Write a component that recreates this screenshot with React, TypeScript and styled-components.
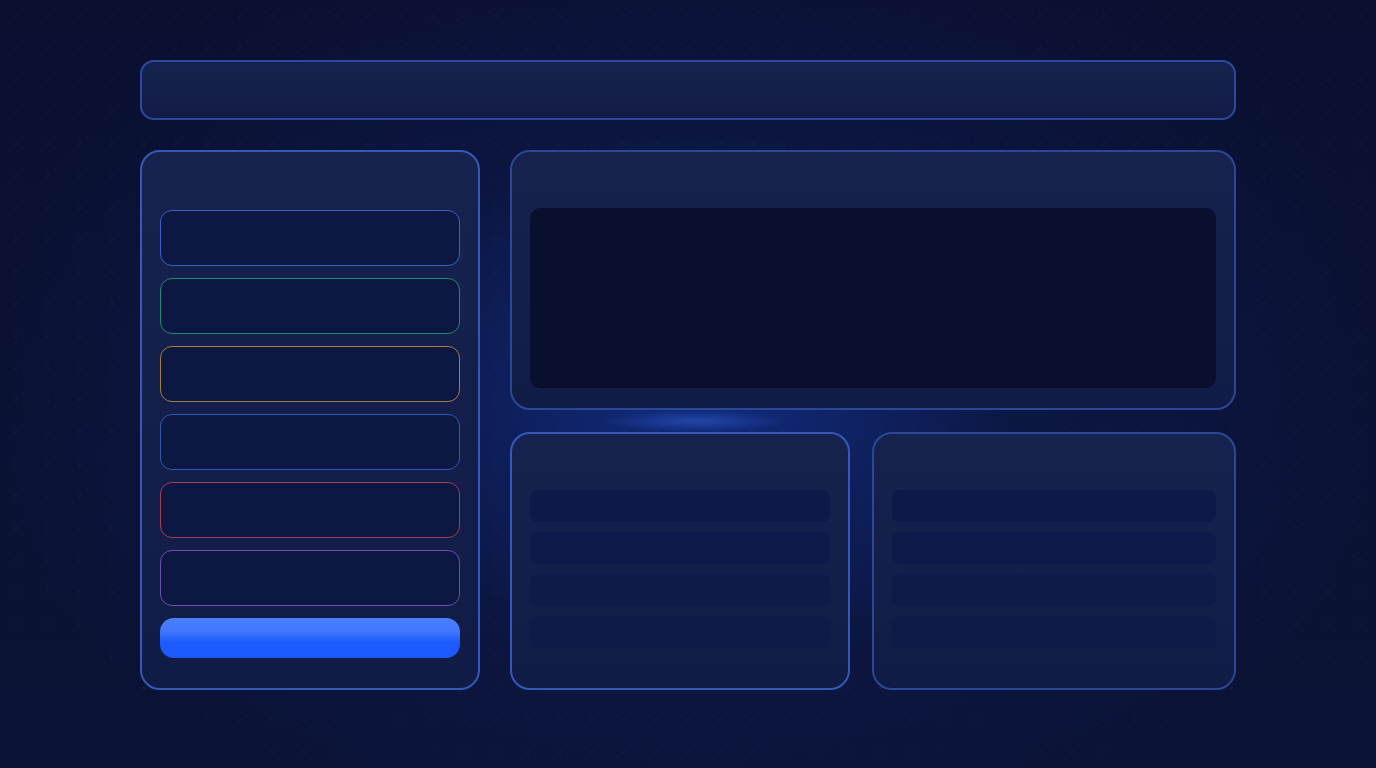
import React from "react";
import styled, { createGlobalStyle } from "styled-components";

const Global = createGlobalStyle`
  html, body { margin: 0; padding: 0; }
  body {
    width: 1376px; height: 768px; overflow: hidden;
    font-family: "Inter", "Liberation Sans", sans-serif;
    background: #0a1232;
  }
`;

const Page = styled.div`
  position: relative;
  width: 1376px;
  height: 768px;
  box-sizing: border-box;
  padding: 60px 140px 78px;
  display: flex;
  flex-direction: column;
  gap: 30px;
  background:
    radial-gradient(rgba(70, 100, 180, 0.2) 1px, transparent 1.4px) 0 0 / 32px 32px,
    radial-gradient(ellipse 420px 360px at 700px 400px, rgba(20, 60, 170, 0.5), transparent 75%),
    radial-gradient(ellipse 900px 600px at 690px 380px, rgba(16, 36, 110, 0.5), transparent 80%),
    linear-gradient(180deg, #0a1030 0%, #0b1336 100%);
`;

const TopBar = styled.header`
  height: 60px;
  box-sizing: border-box;
  border-radius: 14px;
  border: 2px solid #2c4a9c;
  background: linear-gradient(180deg, #16224f 0%, #121c46 100%);
`;

const Main = styled.div`
  flex: 1;
  display: flex;
  gap: 30px;
`;

const Panel = styled.section<{ $bright?: boolean }>`
  box-sizing: border-box;
  border-radius: 20px;
  border: 2px solid ${(p) => (p.$bright ? "#3658b8" : "#2b4796")};
  background: linear-gradient(180deg, #16234f 0%, #111c46 100%);
`;

const Sidebar = styled(Panel)`
  width: 340px;
  padding: 58px 18px 30px;
  display: flex;
  flex-direction: column;
  gap: 12px;
`;

const Field = styled.div<{ $color: string }>`
  height: 56px;
  box-sizing: border-box;
  border-radius: 12px;
  border: 1.5px solid ${(p) => p.$color};
  background: #0c1842;
`;

const Action = styled.button`
  height: 40px;
  border: none;
  border-radius: 14px;
  background: linear-gradient(180deg, #4a80ff 0%, #3f77ff 35%, #1c5cff 60%, #1a5aff 100%);
  cursor: pointer;
`;

const Content = styled.div`
  flex: 1;
  display: flex;
  flex-direction: column;
  gap: 22px;
`;

const Preview = styled(Panel)`
  height: 260px;
  padding: 56px 18px 20px;
  display: flex;
`;

const Screen = styled.div`
  flex: 1;
  border-radius: 10px;
  background: #09102e;
`;

const Row = styled.div`
  flex: 1;
  display: flex;
  gap: 22px;
`;

const ListCard = styled(Panel)<{ $w: number }>`
  width: ${(p) => p.$w}px;
  padding: 56px 18px 20px;
  display: flex;
  flex-direction: column;
  gap: 10px;
`;

const Item = styled.div<{ $fade: number }>`
  height: 32px;
  border-radius: 8px;
  background: rgba(12, 24, 72, ${(p) => p.$fade});
`;

const Glow = styled.div`
  position: absolute;
  left: 600px;
  top: 410px;
  width: 190px;
  height: 22px;
  background: radial-gradient(ellipse at center, rgba(60, 110, 230, 0.4), transparent 70%);
  pointer-events: none;
`;

const fields = ["#3a60cc", "#1f8a78", "#a87e40", "#3456b4", "#a83a5c", "#6a50b0"];

export default function App() {
  return (
    <>
      <Global />
      <Page>
        <TopBar />
        <Main>
          <Sidebar $bright>
            {fields.map((c, i) => (
              <Field key={i} $color={c} />
            ))}
            <Action />
          </Sidebar>
          <Content>
            <Preview>
              <Screen />
            </Preview>
            <Row>
              <ListCard $w={340} $bright>
                {[0.9, 0.75, 0.6, 0.45].map((f, i) => (
                  <Item key={i} $fade={f} />
                ))}
              </ListCard>
              <ListCard $w={364}>
                {[0.9, 0.75, 0.6, 0.45].map((f, i) => (
                  <Item key={i} $fade={f} />
                ))}
              </ListCard>
            </Row>
          </Content>
        </Main>
        <Glow />
      </Page>
    </>
  );
}
